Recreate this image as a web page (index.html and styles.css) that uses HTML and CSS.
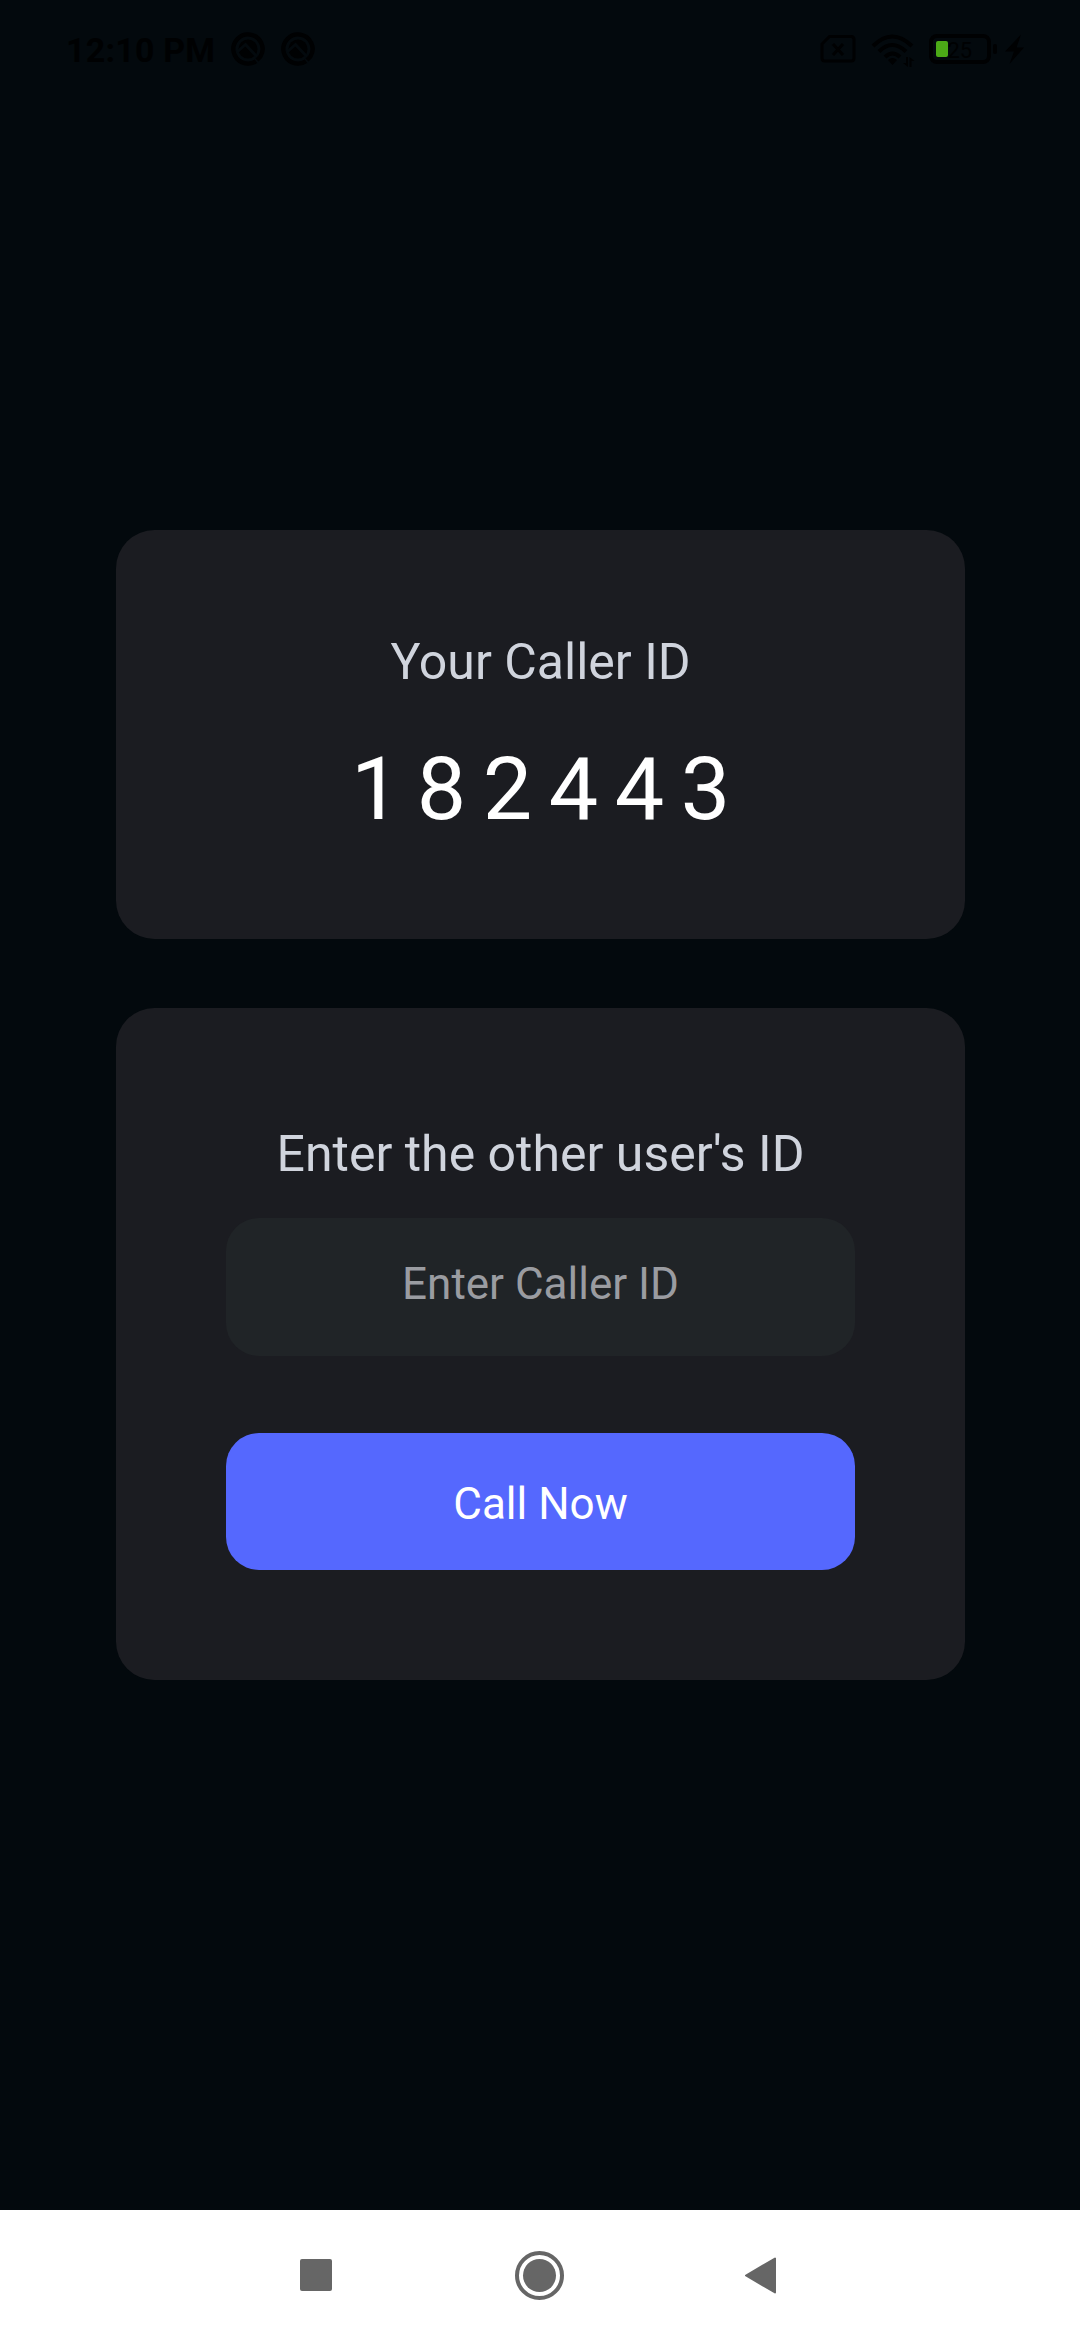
FILE: index.html
```html
<!DOCTYPE html>
<html lang="en">
<head>
<meta charset="utf-8">
<title>Caller ID</title>
<link rel="stylesheet" href="styles.css">
</head>
<body>
<header class="status">
  <span class="time">12:10 PM</span>
  <svg class="app-icon" viewBox="0 0 34 34"><use href="#q"/></svg>
  <svg class="app-icon second" viewBox="0 0 34 34"><g id="q">
    <circle cx="17" cy="17" r="9.500" fill="#000102"/>
    <path d="M6 20l8.500-7.500L28 27" fill="none" stroke="#03090d" stroke-width="3"/>
    <path d="M25 29.200A14.600 14.600 0 1 1 29.500 24.500L26 28" fill="none" stroke="#000102" stroke-width="4.300"/></g></svg>
  <svg class="indicators" viewBox="0 0 206 34">
    <g fill="none" stroke="#000102">
      <path d="M9.500 4.500h21.500q3 0 3 3v18.500q0 3-3 3H5q-3 0-3-3V12z" stroke-width="3"/>
      <path d="M13 12l10 11M23 12L13 23" stroke-width="3"/>
      <path d="M53 14q19-19 39 0M59 19.500q13-13 27 0M65 25q7.500-7 15 0" stroke-width="4"/>
      <rect x="111" y="4" width="58" height="26" rx="6" stroke-width="4"/>
    </g>
    <g fill="#000102">
      <path d="M68 28q4.500-4 9 0l-4.500 5z"/>
      <path d="M86 25h2v10l-5-4h3zM89.500 35V25l5 4h-3v6z"/>
      <rect x="173" y="12" width="4" height="10" rx="2"/>
      <path d="M201 2.500L185 19.500h9l-4.500 12.500 14.500-16.500h-7.500z"/>
    </g>
    <text class="level" x="127.500" y="26">25</text>
    <rect x="116" y="9" width="12" height="16" rx="2" fill="#4caa17"/>
  </svg>
</header>
<main class="content">
  <section class="card own">
    <h1 class="label">Your Caller ID</h1>
    <p class="code">182443</p>
  </section>
  <section class="card other">
    <label class="label" for="caller">Enter the other user's ID</label>
    <input class="field" id="caller" placeholder="Enter Caller ID">
    <button class="call">Call Now</button>
  </section>
</main>
<nav class="nav">
  <svg class="nav-icons" viewBox="0 0 480 54">
    <g fill="#666">
      <rect y="11" width="32" height="32" rx="2"/>
      <circle cx="239.500" cy="27.500" r="16.500"/>
      <circle cx="239.500" cy="27.500" r="22.500" fill="none" stroke="#666" stroke-width="4"/>
      <path d="M446 27.500L475 10.500V44.500z" stroke="#666" stroke-width="2" stroke-linejoin="round"/>
    </g>
  </svg>
</nav>
</body>
</html>
```
FILE: styles.css
```css
* { box-sizing: border-box; }
body {
  margin: 0;
  width: 1080px;
  height: 2340px;
  display: flex;
  flex-direction: column;
  overflow: hidden;
  background: #03090d;
  font-family: Roboto, sans-serif;
}
.status {
  height: 98px;
  padding: 32px 54px 0 66px;
  display: flex;
  align-items: flex-start;
}
.time {
  width: 165px;
  color: #000102;
  font-size: 34px;
  font-weight: 700;
  line-height: 36px;
  white-space: nowrap;
  letter-spacing: 0.2px;
}
.app-icon { width: 34px; height: 34px; }
.second { margin-left: 16px; }
.indicators {
  width: 206px;
  height: 34px;
  margin-left: auto;
  overflow: visible;
}
.level {
  fill: #000102;
  font-size: 22px;
}
.content {
  flex: 1;
  padding: 432px 115px 0 116px;
  display: flex;
  flex-direction: column;
  gap: 69px;
}
.card {
  display: flex;
  flex-direction: column;
  align-items: center;
  border-radius: 38.5px;
  background: #1b1c21;
}
.own { height: 409px; padding-top: 103px; }
.other { height: 672px; padding: 117px 110px 0; }
.label {
  margin: 0;
  color: #d0d4dd;
  font-size: 50px;
  font-weight: 400;
  line-height: 58px;
}
.code {
  margin: 46px 0 0;
  padding-left: 16.5px;
  color: #fff;
  font-size: 88px;
  line-height: 104px;
  letter-spacing: 16.5px;
}
.field, .call {
  width: 100%;
  border: 0;
  border-radius: 33px;
  font: 400 44px/52px Roboto, sans-serif;
  text-align: center;
}
.field {
  height: 138px;
  margin-top: 35px;
  padding: 0 0 6px;
  background: #202427;
  color: #fff;
}
.field::placeholder { color: #9a9ca1; opacity: 1; }
.call {
  height: 137px;
  margin-top: 77px;
  padding: 4px 0 0;
  background: #5568fe;
  color: #fff;
}
.nav {
  height: 130px;
  padding: 38px 0 0 300px;
  background: #fff;
}
.nav-icons { display: block; width: 480px; height: 54px; }
```
